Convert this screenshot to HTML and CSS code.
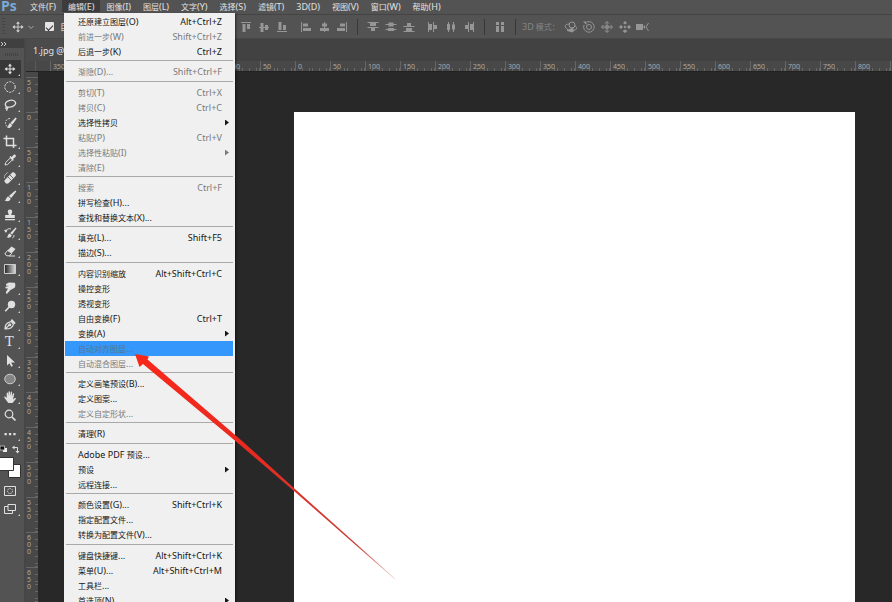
FILE: index.html
```html
<!DOCTYPE html>
<html lang="zh-CN">
<head>
<meta charset="utf-8">
<title>Photoshop</title>
<link rel="stylesheet" href="styles.css">
</head>
<body>
<header class="menubar">
  <span class="logo">Ps</span>
  <nav class="menus">
    <button>文件<i>(F)</i></button>
    <button class="open">编辑<i>(E)</i></button>
    <button>图像<i>(I)</i></button>
    <button>图层<i>(L)</i></button>
    <button>文字<i>(Y)</i></button>
    <button>选择<i>(S)</i></button>
    <button>滤镜<i>(T)</i></button>
    <button><i>3D(D)</i></button>
    <button>视图<i>(V)</i></button>
    <button>窗口<i>(W)</i></button>
    <button>帮助<i>(H)</i></button>
  </nav>
</header>

<div class="options">
  <div class="options-left">
    <span class="grip"></span>
    <svg class="ic light" viewBox="0 0 16 16"><path d="M8 3v10M3 8h10" stroke="currentColor"/><path d="M8 1.600l2.200 2.800H5.800zM8 14.400l2.200-2.800H5.800zM1.600 8l2.800-2.200v4.400zM14.400 8l-2.800-2.200v4.400z" fill="currentColor"/></svg>
    <svg class="chev" viewBox="0 0 8 8"><path d="M1.500 3l2.500 2.500L6.500 3" fill="none" stroke="currentColor"/></svg>
    <label class="auto"><input type="checkbox" checked><span>自</span></label>
  </div>
  <div class="set">
    <svg class="ic" viewBox="0 0 18 18"><path d="M4 4.500h10" stroke="currentColor"/><path d="M5.500 6h3v8h-3zM10 6h3v5h-3z" fill="currentColor"/></svg>
    <svg class="ic" viewBox="0 0 18 18"><path d="M4 9.500h10" stroke="currentColor"/><path d="M5.500 5h3v9h-3zM10 7h3v5h-3z" fill="currentColor"/></svg>
    <svg class="ic" viewBox="0 0 18 18"><path d="M4 13.500h10" stroke="currentColor"/><path d="M5.500 4h3v8h-3zM10 7h3v5h-3z" fill="currentColor"/></svg>
  </div>
  <div class="set">
    <svg class="ic" viewBox="0 0 18 18"><path d="M4.500 4v10" stroke="currentColor"/><path d="M6 5.500h5v3H6zM6 10h8v3H6z" fill="currentColor"/></svg>
    <svg class="ic" viewBox="0 0 18 18"><path d="M9.500 4v10" stroke="currentColor"/><path d="M7 5.500h5v3H7zM5 10h9v3H5z" fill="currentColor"/></svg>
    <svg class="ic" viewBox="0 0 18 18"><path d="M13.500 4v10" stroke="currentColor"/><path d="M7 5.500h5v3H7zM4 10h8v3H4z" fill="currentColor"/></svg>
  </div>
  <span class="rule"></span>
  <div class="set">
    <svg class="ic" viewBox="0 0 18 18"><path d="M3.500 4.500h11M3.500 9.500h11" stroke="currentColor"/><path d="M6 5h6v3H6zM7 10h4v3H7z" fill="currentColor"/></svg>
    <svg class="ic" viewBox="0 0 18 18"><path d="M3.500 6.500h11M3.500 11.500h11" stroke="currentColor"/><path d="M6.500 4.500h5v4h-5zM6 10h6v3H6z" fill="currentColor"/></svg>
    <svg class="ic" viewBox="0 0 18 18"><path d="M3.500 8.500h11M3.500 13.500h11" stroke="currentColor"/><path d="M7 5h4v3H7zM6 10h6v3H6z" fill="currentColor"/></svg>
  </div>
  <div class="set">
    <svg class="ic" viewBox="0 0 18 18"><path d="M4.500 4v10M9.500 4v10" stroke="currentColor"/><path d="M5 6h3v6H5zM10 7h3v4h-3z" fill="currentColor"/></svg>
    <svg class="ic" viewBox="0 0 18 18"><path d="M6.500 4v10M11.500 4v10" stroke="currentColor"/><path d="M5 6h3v6H5zM10 6.500h3v5h-3z" fill="currentColor"/></svg>
    <svg class="ic" viewBox="0 0 18 18"><path d="M8.500 4v10M13.500 4v10" stroke="currentColor"/><path d="M5 7h3v4H5zM10 6h3v6h-3z" fill="currentColor"/></svg>
  </div>
  <span class="rule"></span>
  <svg class="ic" viewBox="0 0 18 18"><path d="M5 4h3v3H5zM10 4h3v3h-3zM5 8h3v6H5zM10 8h3v6h-3z" fill="currentColor"/></svg>
  <span class="rule"></span>
  <span class="mode"><i>3D</i> 模式：</span>
  <div class="set">
    <svg class="ic" viewBox="0 0 18 18" fill="none" stroke="currentColor"><circle cx="10" cy="7" r="3"/><path d="M7 6C2 6.500 2 9.500 6 11.500M13 8c3 1.500 2 4.500-3 4.500"/><path d="M5 12.500l6-2.500v4z" fill="currentColor"/></svg>
    <svg class="ic" viewBox="0 0 18 18" fill="none" stroke="currentColor"><circle cx="9" cy="9" r="2.500"/><path d="M7 4a5.300 5.300 0 1 1-3 3"/><path d="M3 3.500h3.500V7z" fill="currentColor" stroke="none"/></svg>
    <svg class="ic" viewBox="0 0 18 18" fill="none" stroke="currentColor"><path d="M9 4v10M4 9h10M7 5.500l2-2 2 2M7 12.500l2 2 2-2M5.500 7l-2 2 2 2M12.500 7l2 2-2 2"/><path d="M7.500 7.500h3v3h-3z" stroke-width=".6"/></svg>
    <svg class="ic" viewBox="0 0 18 18" fill="currentColor"><path d="M9 7.500L10.500 9 9 10.500 7.500 9zM9 3l2 2-2 1.500L7 5zM9 15l2.500-2L9 11.500 6.500 13zM3 9l2-2 2 2-2 2zM15 9l-2-2-2 2 2 2z"/></svg>
    <svg class="ic" viewBox="0 0 18 18" fill="currentColor"><path d="M2 6h7v6H2zM9 9l2-2v4z"/><path d="M14.500 5L12 9l2.500 4" fill="none" stroke="currentColor"/></svg>
  </div>
</div>

<div class="workspace">
  <aside class="toolbar">
    <div class="collapse"><svg viewBox="0 0 8 6"><path d="M1 1l2 2-2 2M4 1l2 2-2 2" fill="none" stroke="currentColor"/></svg></div>
    <div class="handle"><span></span></div>
    <div class="tools">
      <button class="on" aria-label="移动"><svg viewBox="0 0 16 16"><path d="M8 4v8M4 8h8" stroke="currentColor"/><path d="M8 2.500l2 2.700H6zM8 13.500l2-2.700H6zM2.500 8l2.700-2v4zM13.500 8l-2.700-2v4z"/></svg></button>
      <button aria-label="选框"><svg viewBox="0 0 16 16"><circle cx="8" cy="8" r="5.200" fill="none" stroke="currentColor" stroke-dasharray="2.200 1.100"/></svg></button>
      <button aria-label="套索"><svg viewBox="0 0 16 16" fill="none" stroke="currentColor" stroke-width="1.200"><path d="M5 9.800C2 8.500 3 4 8 3.300c5-.7 7 2.700 4.500 5-2 1.900-5 2.100-7.500 1.500zM5 9.800c-2 .4-1.500 2.500.2 2 1.200-.7.300-2-.7-1.800M5.200 11.800l-.6 2"/></svg></button>
      <button aria-label="快速选择"><svg viewBox="0 0 16 16"><path d="M8 3.500a4.500 4.500 0 1 0 0 9" fill="none" stroke="currentColor" stroke-dasharray="1.800 1.200"/><path d="M13.500 2.500l1.300 1.100-4.300 6-2.200-1.700zM8 8.200l2.100 1.900c-.5 2.500-2.500 3-5.100 2.300 1.800-.7 1.200-3.700 3-4.200z"/></svg></button>
      <button aria-label="裁剪"><svg viewBox="0 0 16 16"><path d="M4.500 1.500v10h10M1.500 4.500h10v9.500" fill="none" stroke="currentColor" stroke-width="1.500"/></svg></button>
      <button aria-label="吸管"><svg viewBox="0 0 16 16"><path d="M3 13l.7-2.500L8.500 5.800l2 2L5.600 12.500z" fill="none" stroke="currentColor"/><path d="M7.500 5l1-1 1.200 1.100 1.800-2.200c2-1 3 .8 2 2L11 7l1 1-1.100 1z"/></svg></button>
      <button aria-label="修复画笔"><svg viewBox="0 0 16 16"><path d="M2.800 10L10 2.700c1-.8 2-.5 3 .5s1.200 2.200.4 3.100L6.500 13.300c-1 .7-2.200.6-3-.3s-1.500-2-.7-3z"/><path d="M6 7l3.200 3.200M8 5l3.200 3.200" stroke="#535353" stroke-width=".8"/><path d="M2.500 8a5 5 0 0 1 4-5.500" fill="none" stroke="currentColor" stroke-dasharray="1.400 1"/></svg></button>
      <button aria-label="画笔"><svg viewBox="0 0 16 16"><path d="M13.300 2.500l1 .9L9.200 10 6.900 8zM6.300 8.500l2.300 2c-.3 2.600-2.900 3.300-6.100 2 2-.5 1.500-3.400 3.800-4z"/></svg></button>
      <button aria-label="仿制图章"><svg viewBox="0 0 16 16"><path d="M8 2.500c2 0 2.700 1.500 2 3L9.200 8h3.600v3H3.200V8h3.600L6 5.500c-.7-1.500 0-3 2-3zM3 12h10v1.300H3z"/></svg></button>
      <button aria-label="历史记录画笔"><svg viewBox="0 0 16 16"><path d="M13.700 2.500l.9.700-4.500 6.300-1.900-1.500zM7.700 8.600l2 1.700c-.4 2.300-2.600 2.900-5.200 2 1.800-.6 1.200-3.200 3.200-3.700z"/><path d="M4 7a3.500 3.500 0 0 1 5-3M12 10c0 1.500-.5 2.500-1.500 3" fill="none" stroke="currentColor"/><path d="M2 5l3.500-.5L4 8z"/></svg></button>
      <button aria-label="橡皮擦"><svg viewBox="0 0 16 16"><path d="M9.500 3.500L13.500 6 10 10 5.500 7.500z"/><path d="M5.500 7.500l4.300 2.700-2.300 2.600H5L2.800 11z" fill="none" stroke="currentColor"/><path d="M7 13h6" stroke="currentColor"/></svg></button>
      <button aria-label="渐变"><svg viewBox="0 0 16 16"><defs><linearGradient id="g"><stop stop-color="#222"/><stop offset="1" stop-color="#ddd"/></linearGradient></defs><path d="M2.500 3.500h11v9h-11z" fill="url(#g)" stroke="#ccc"/></svg></button>
      <button aria-label="涂抹"><svg viewBox="0 0 16 16"><path d="M4 4l3-1.500 5.500.3c1 .5 1.300 3 .2 5L8.500 10 5.300 13.500c-1 .6-1.800-.3-1.300-1.400L6 8.500H3.800c-.8-.8-.3-1.800.5-1.900L7 6 4 5.500z"/></svg></button>
      <button aria-label="减淡"><svg viewBox="0 0 16 16"><circle cx="9.500" cy="6.500" r="3.700"/><path d="M7.200 9l-4 4.300" stroke="currentColor" stroke-width="1.600"/></svg></button>
      <button aria-label="钢笔"><svg viewBox="0 0 16 16" fill="none" stroke="currentColor" stroke-width="1.200"><path d="M3 13c0-4 1-6 6-7.500l2.500 2.700C10.500 12 8 12.800 3 13zM3 13l4.300-4"/><circle cx="7.800" cy="8.700" r=".9"/><path d="M9.300 3.700L13 7.600" stroke-width="2"/></svg></button>
      <button class="type" aria-label="文字">T</button>
      <button aria-label="路径选择"><svg viewBox="0 0 16 16"><path d="M5 2v10.500l2.500-2.200 1.700 3.500 1.700-.8-1.700-3.400H13z"/></svg></button>
      <button aria-label="椭圆"><svg viewBox="0 0 16 16"><ellipse cx="8" cy="8" rx="5.300" ry="4.800" fill="#858585" stroke="#ccc"/></svg></button>
      <button aria-label="抓手"><svg viewBox="0 0 16 16"><path d="M4.700 9V4.200c.1-.9 1.200-.9 1.400 0l.4 3V2.800c.1-.9 1.300-.9 1.400 0l.3 4.200.6-4c.2-.9 1.300-.7 1.300.2l-.2 4.300 1-2.800c.4-.8 1.400-.4 1.300.4L11 10.500l1.500-1.300c.9-.5 1.800.1 1.100 1L10.500 14H6.300L2.400 8.700c-.5-.9.4-1.600 1.100-.9z"/></svg></button>
      <button class="plain" aria-label="缩放"><svg viewBox="0 0 16 16"><circle cx="7" cy="7" r="3.800" fill="none" stroke="currentColor" stroke-width="1.200"/><path d="M9.800 9.800l3.700 3.700" stroke="currentColor" stroke-width="1.700"/></svg></button>
      <button aria-label="更多"><svg viewBox="0 0 16 16"><path d="M2.500 7h2.300v2.300H2.500zM6.900 7h2.300v2.300H6.900zM11.300 7h2.300v2.300h-2.300z"/></svg></button>
    </div>
    <svg class="swatches" viewBox="0 0 24 36">
      <path d="M3 5h4v4H3z" fill="#eee"/><path d="M0 3h4.500v4H0z" fill="#111" stroke="#ccc" stroke-width=".8"/>
      <path d="M14 4.500h3.500v4" fill="none" stroke="#ddd"/><path d="M12 4.500L14.500 2.500v4zM17.500 10.500l-2-2.500h4z" fill="#ddd"/>
      <path d="M8.500 21.500h12v13h-12z" fill="#fff" stroke="#333"/><path d="M-.5 14.500h14v13h-14z" fill="#fff" stroke="#333"/>
    </svg>
    <div class="modes">
      <button class="plain" aria-label="快速蒙版"><svg viewBox="0 0 16 16" fill="none" stroke="currentColor"><path d="M2.500 3.500h11v9h-11z"/><circle cx="8" cy="8" r="2.500" stroke-dasharray="1.300 .9"/></svg></button>
      <button aria-label="屏幕模式"><svg viewBox="0 0 16 16" fill="none" stroke="currentColor"><path d="M6 3.500h7.500v6H6z"/><path d="M6 5.500H2.500v7h8v-3"/></svg></button>
    </div>
  </aside>

  <main class="document">
    <div class="tabs"><span class="tab">1.jpg @</span></div>
    <div class="hruler">
      <span class="corner"></span>
      <ol>
        <li>350</li><li></li><li></li><li></li><li></li><li>100</li><li>50</li><li>0</li><li>50</li><li>100</li><li>150</li><li>200</li><li>250</li><li>300</li><li>350</li><li>400</li><li>450</li><li>500</li><li>550</li><li>600</li><li>650</li><li>700</li><li>750</li><li>800</li><li></li>
      </ol>
    </div>
    <div class="view">
      <ol class="vruler">
        <li>50</li><li>0</li><li>50</li><li>100</li><li>150</li><li>200</li><li>250</li><li>300</li><li>350</li><li>400</li><li>450</li><li>500</li><li>550</li><li>600</li><li>650</li>
      </ol>
      <div class="canvas"><div class="artboard"></div></div>
    </div>
  </main>
</div>

<div class="dropdown">
  <section>
    <button>还原建立图层<i>(O)</i><kbd>Alt+Ctrl+Z</kbd></button>
    <button disabled>前进一步<i>(W)</i><kbd>Shift+Ctrl+Z</kbd></button>
    <button>后退一步<i>(K)</i><kbd>Ctrl+Z</kbd></button>
  </section>
  <section class="short">
    <button disabled>渐隐<i>(D)...</i><kbd>Shift+Ctrl+F</kbd></button>
  </section>
  <section>
    <button disabled>剪切<i>(T)</i><kbd>Ctrl+X</kbd></button>
    <button disabled>拷贝<i>(C)</i><kbd>Ctrl+C</kbd></button>
    <button class="sub">选择性拷贝</button>
    <button disabled>粘贴<i>(P)</i><kbd>Ctrl+V</kbd></button>
    <button class="sub" disabled>选择性粘贴<i>(I)</i></button>
    <button disabled>清除<i>(E)</i></button>
  </section>
  <section>
    <button disabled>搜索<kbd>Ctrl+F</kbd></button>
    <button>拼写检查<i>(H)...</i></button>
    <button>查找和替换文本<i>(X)...</i></button>
  </section>
  <section class="short">
    <button>填充<i>(L)...</i><kbd>Shift+F5</kbd></button>
    <button>描边<i>(S)...</i></button>
  </section>
  <section>
    <button>内容识别缩放<kbd>Alt+Shift+Ctrl+C</kbd></button>
    <button>操控变形</button>
    <button>透视变形</button>
    <button>自由变换<i>(F)</i><kbd>Ctrl+T</kbd></button>
    <button class="sub">变换<i>(A)</i></button>
    <button class="hot" disabled>自动对齐图层<i>...</i></button>
    <button disabled>自动混合图层<i>...</i></button>
  </section>
  <section>
    <button>定义画笔预设<i>(B)...</i></button>
    <button>定义图案<i>...</i></button>
    <button disabled>定义自定形状<i>...</i></button>
  </section>
  <section class="short">
    <button>清理<i>(R)</i></button>
  </section>
  <section>
    <button><i>Adobe PDF&nbsp;</i>预设<i>...</i></button>
    <button class="sub">预设</button>
    <button>远程连接<i>...</i></button>
  </section>
  <section class="short">
    <button>颜色设置<i>(G)...</i><kbd>Shift+Ctrl+K</kbd></button>
    <button>指定配置文件<i>...</i></button>
    <button>转换为配置文件<i>(V)...</i></button>
  </section>
  <section>
    <button>键盘快捷键<i>...</i><kbd>Alt+Shift+Ctrl+K</kbd></button>
    <button>菜单<i>(U)...</i><kbd>Alt+Shift+Ctrl+M</kbd></button>
    <button>工具栏<i>...</i></button>
    <button class="sub">首选项<i>(N)</i></button>
  </section>
</div>

<svg class="pointer" viewBox="0 0 262 226">
  <defs><linearGradient id="fade" gradientUnits="userSpaceOnUse" x1="0" y1="0" x2="260" y2="225"><stop stop-color="#f8281a"/><stop offset=".45" stop-color="#e92a20"/><stop offset=".85" stop-color="#c8403a"/><stop offset="1" stop-color="#c8403a" stop-opacity=".2"/></linearGradient></defs>
  <path d="M0 0L14 2.500 12.500 5.500 106 86 160 135 260 224.500 260 225.500 159 137 104 90 8 10 4.500 13z" fill="url(#fade)"/>
</svg>
</body>
</html>
```
FILE: styles.css
```css
* { box-sizing: border-box; }

body {
  margin: 0;
  height: 100vh;
  display: flex;
  flex-direction: column;
  overflow: hidden;
  position: relative;
  background: #535353;
  color: #e2e2e2;
  font-family: "Noto Sans", "Noto Sans CJK SC", sans-serif;
  font-size: 8px;
}

button {
  border: 0;
  padding: 0;
  background: none;
  color: inherit;
  font: inherit;
}

i, kbd {
  font-family: inherit;
  font-style: normal;
  font-size: 9px;
}

ol { margin: 0; padding: 0; list-style: none; }
svg { display: block; flex: none; }

/* Menu bar */
.menubar {
  display: flex;
  height: 15px;
  border-bottom: 1px solid #444;
}
.logo {
  width: 24px;
  padding-left: 1px;
  color: #78a9d8;
  font: bold 14px/11px "Open Sans", sans-serif;
}
.menus { display: flex; height: 12px; }
.menus button { padding: 0 6px; line-height: 11px; white-space: nowrap; }
.menus .open { background: #3c3c3c; }

/* Options bar */
.options {
  display: flex;
  align-items: center;
  gap: 6px;
  height: 24px;
  border-bottom: 1px solid #484848;
  color: #969696;
}
.options-left {
  display: flex;
  align-items: center;
  width: 231px;
  color: #d6d6d6;
}
.grip {
  width: 3px;
  height: 18px;
  margin: 0 4px 0 2px;
  background: repeating-linear-gradient(#444 0 1px, transparent 1px 3px);
}
.ic { width: 18px; height: 18px; }
.ic.light { height: 14px; }
.chev { width: 8px; height: 8px; margin-right: 10px; color: #aaa; }
.auto { display: flex; align-items: center; gap: 6px; font-size: 9px; }
.auto input {
  appearance: none;
  width: 9px;
  height: 9px;
  margin: 0;
  border-radius: 1px;
  background: #e4e4e4;
  display: grid;
  place-items: center;
}
.auto input::before {
  content: "";
  width: 6px;
  height: 3px;
  border: solid #333;
  border-width: 0 0 1px 1px;
  transform: rotate(-45deg);
}
.set { display: flex; }
.rule { width: 1px; height: 16px; background: #383838; }
.mode { width: 34px; color: #858585; white-space: nowrap; }

/* Tool column */
.workspace { display: flex; flex: 1; min-height: 0; }
.toolbar { width: 26px; border-right: 2px solid #464646; }
.collapse { height: 9px; padding: 2px 0; background: #404040; color: #ccc; }
.collapse svg { width: 8px; height: 6px; }
.handle { display: grid; place-items: center; height: 12px; }
.handle span {
  width: 14px;
  height: 3px;
  background: repeating-linear-gradient(90deg, #424242 0 1px, transparent 1px 2px);
}
.tools button, .modes button {
  display: flex;
  align-items: center;
  width: 21px;
  height: 18px;
  padding-left: 2px;
  position: relative;
  color: #e0e0e0;
  fill: currentColor;
}
.tools button:nth-child(4n) { margin-bottom: 1px; }
.tools svg, .modes svg { width: 16px; height: 16px; }
.tools .on { background: #383838; }
.tools button::after, .modes button::after {
  content: "";
  position: absolute;
  right: 1px;
  bottom: 2px;
  border: 1px solid #ccc;
  border-top-color: transparent;
  border-left-color: transparent;
}
.tools .plain::after, .modes .plain::after { content: none; }
.tools .type {
  padding-left: 5px;
  font: 13px/18px "DejaVu Serif", serif;
}
.swatches { width: 24px; height: 36px; }
.modes { padding-top: 3px; }

/* Document window */
.document { flex: 1; min-width: 0; display: flex; flex-direction: column; }
.tabs { height: 22px; background: #424242; }
.tab {
  display: inline-block;
  height: 22px;
  padding: 0 8px 0 7px;
  background: #4b4b4b;
  font-size: 9px;
  line-height: 23px;
}
.hruler {
  display: flex;
  height: 11px;
  background: #484848;
  border-bottom: 1px solid #222;
  overflow: hidden;
}
.corner {
  flex: none;
  width: 24px;
  background: linear-gradient(90deg, transparent 9px, #5a5a5a 9px 10px, transparent 10px);
}
.hruler ol { display: flex; }
.hruler li {
  flex: none;
  width: 35px;
  padding-left: 2px;
  border-left: 1px solid #666;
  background: repeating-linear-gradient(90deg, transparent 0 8%, #666 8% 10%) bottom / 100% 3px no-repeat;
  color: #a8a8a8;
  font-size: 7px;
  line-height: 12px;
}
.view { flex: 1; min-height: 0; display: flex; }
.vruler {
  width: 12px;
  padding-top: 5px;
  background: #484848;
  overflow: hidden;
}
.vruler li {
  height: 35px;
  padding: 1px 7px 0 1px;
  border-top: 1px solid #666;
  background: repeating-linear-gradient(transparent 0 8%, #666 8% 10%) right / 3px 100% no-repeat;
  color: #a8a8a8;
  font-size: 7px;
  line-height: 7px;
  text-align: center;
  word-break: break-all;
}
.canvas {
  flex: 1;
  display: flex;
  padding: 40px 37px 0 256px;
  background: #282828;
}
.artboard { flex: 1; background: #fff; }

/* Open edit menu */
.dropdown {
  position: absolute;
  top: 13px;
  left: 64px;
  width: 171px;
  padding: 1px 2px 0 1px;
  background: #f0f0f0;
  box-shadow: 1px 1px 2px #0008;
  color: #161616;
}
.dropdown section { padding-bottom: 1px; }
.dropdown section + section { padding-top: 4px; background: linear-gradient(#a9a9a9, #a9a9a9) 1px 0 / 100% 1px no-repeat; }
.dropdown .short { padding-bottom: 2px; }
.dropdown button {
  display: flex;
  align-items: center;
  width: 100%;
  height: 15px;
  padding: 0 11px 0 13px;
  line-height: 15px;
  white-space: nowrap;
}
.dropdown button:disabled { color: #7a7a7a; }
.dropdown kbd { margin-left: auto; }
.dropdown .hot { background: #3397fb; }
.dropdown .hot:disabled { color: #5c7590; }
.dropdown .sub { padding-right: 4px; }
.dropdown .sub::after {
  content: "";
  width: 4px;
  height: 6px;
  margin-left: auto;
  background: currentColor;
  clip-path: polygon(0 0, 100% 50%, 0 100%);
}

/* Annotation arrow */
.pointer {
  position: absolute;
  top: 354px;
  left: 135px;
  width: 262px;
  height: 226px;
}
```
